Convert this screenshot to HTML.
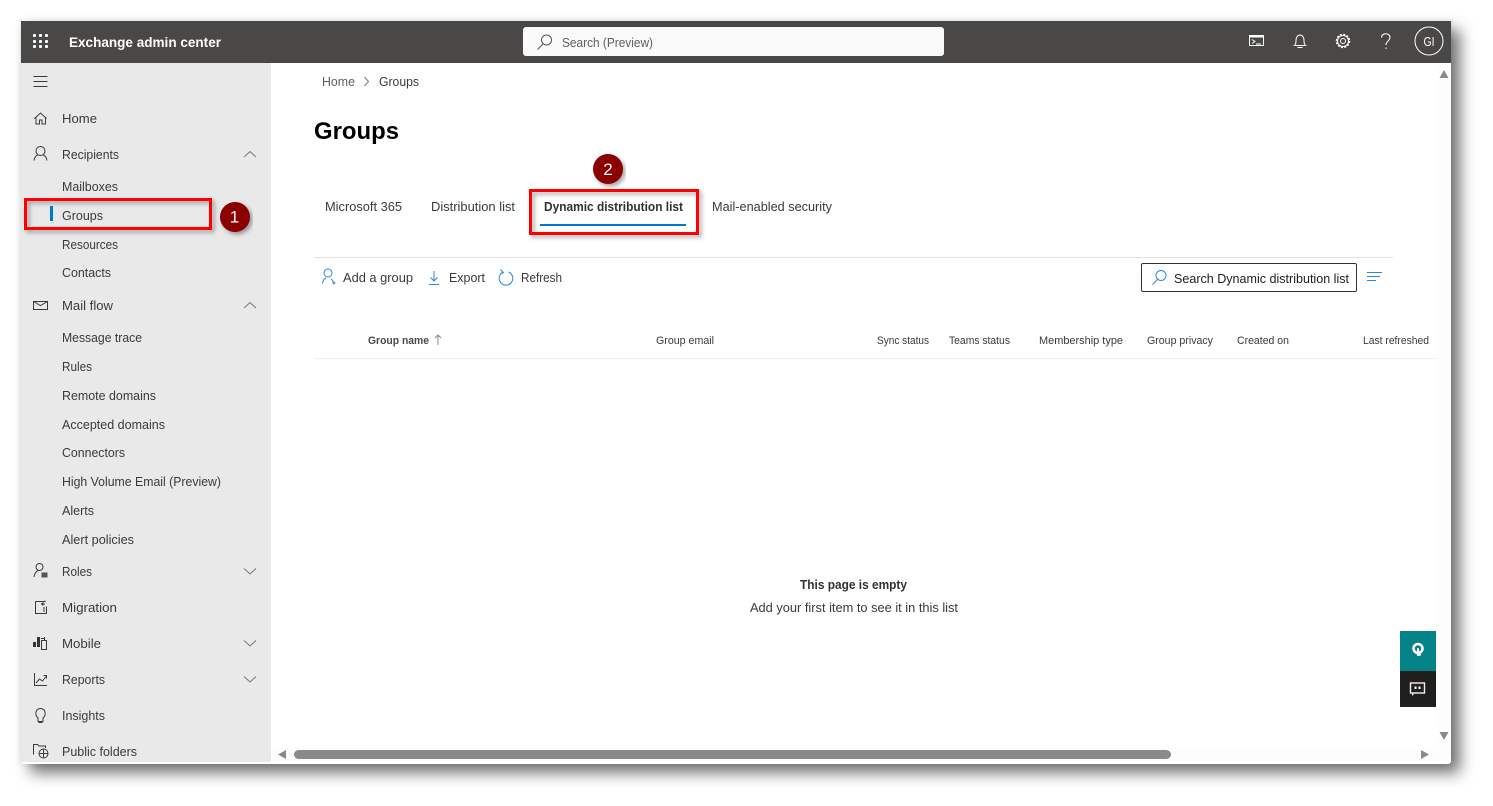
<!DOCTYPE html>
<html lang="en">
<head>
<meta charset="utf-8">
<title>Exchange admin center</title>
<style>
html,body{margin:0;padding:0;width:1493px;height:806px;overflow:hidden;background:#fff}
#win{position:absolute;left:21px;top:21px;width:1430px;height:743px;background:#fff;box-shadow:9px 9px 15px rgba(0,0,0,.55),0 0 7px rgba(0,0,0,.1);border-radius:0 0 3px 3px}
svg{position:absolute;left:0;top:0}
text{font-family:"Liberation Sans",sans-serif;font-size:13px;fill:#323130}
.n{fill:#3b3a39}
.s{font-size:11px;fill:#3b3a39}
.b{font-weight:bold}
.i{fill:none;stroke:#3b3a39;stroke-width:1}
.u{fill:none;stroke:#2b88d8;stroke-width:1}
.h{fill:none;stroke:#fff;stroke-width:1}
.c{fill:none;stroke:#777;stroke-width:1}
</style>
</head>
<body>
<div id="win"></div>
<svg width="1493" height="806" viewBox="0 0 1493 806" xmlns="http://www.w3.org/2000/svg">
<defs>
<filter id="sh" x="-10%" y="-20%" width="120%" height="150%"><feDropShadow dx="2.500" dy="2.500" stdDeviation="2" flood-color="#000" flood-opacity=".35"/></filter>
</defs>

<!-- header -->
<rect x="21" y="21" width="1430" height="42" fill="#4a4846"/>
<g fill="#fff">
<rect x="33" y="34" width="3" height="3" rx="1"/><rect x="39" y="34" width="3" height="3" rx="1"/><rect x="45" y="34" width="3" height="3" rx="1"/>
<rect x="33" y="40" width="3" height="3" rx="1"/><rect x="39" y="40" width="3" height="3" rx="1"/><rect x="45" y="40" width="3" height="3" rx="1"/>
<rect x="33" y="45" width="3" height="3" rx="1"/><rect x="39" y="45" width="3" height="3" rx="1"/><rect x="45" y="45" width="3" height="3" rx="1"/>
</g>
<text x="69" y="47" class="b" style="font-size:13.5px;fill:#fff" textLength="152" lengthAdjust="spacingAndGlyphs">Exchange admin center</text>
<rect x="523" y="27" width="421" height="29" rx="3" fill="#fafafa"/>
<circle cx="546.500" cy="40" r="5" fill="none" stroke="#555" stroke-width="1"/>
<path d="M543 44 L537.500 49.500" stroke="#555" fill="none"/>
<text x="562" y="47" style="fill:#605e5c" textLength="91" lengthAdjust="spacingAndGlyphs">Search (Preview)</text>

<rect x="1249.500" y="35.500" width="14" height="10" class="h"/>
<rect x="1249.500" y="35.500" width="14" height="2" fill="#fff"/>
<path d="M1252 39.500l3 2-3 2M1256 44h5" class="h"/>
<path d="M1294.500 45.500h11c-1.500-1-1.500-3-1.500-5 0-3-1.500-5.500-4-5.500s-4 2.500-4 5.500c0 2 0 4-1.500 5zM1297.500 47.500h5" class="h"/>
<circle cx="1343" cy="41" r="2.500" class="h"/>
<circle cx="1343" cy="41" r="5.500" class="h"/>
<circle cx="1343" cy="41" r="6.500" fill="none" stroke="#fff" stroke-width="1.500" stroke-dasharray="2 1.400"/>
<path d="M1381.500 37.500c0-5 8.500-5 8.500 0 0 3.500-4 3.500-4 7.500M1386 47.500v1.500" class="h"/>
<circle cx="1429" cy="41" r="14" fill="none" stroke="#fff" stroke-width="1"/>
<text x="1429" y="46" text-anchor="middle" style="font-size:13px;fill:#fff" textLength="11" lengthAdjust="spacingAndGlyphs">GI</text>

<!-- sidebar -->
<rect x="21" y="63" width="250" height="699" fill="#e9e9e9"/>
<path d="M33.500 76.500h14M33.500 81.500h14M33.500 86.500h14" class="i"/>

<path d="M34.500 118.500l6-5.500 6 5.500M36 117.500v6.500h3.500v-4h2.500v4h3.500v-6.500" class="i"/>
<circle cx="40.500" cy="151" r="4.500" class="i"/>
<path d="M34 160.500c.5-4 3-5.500 4-5.500M47 160.500c-.5-4-3-5.500-4-5.500" class="i"/>
<rect x="33.500" y="301.500" width="14" height="8" class="i"/>
<path d="M33.500 301.500l7 4 7-4" class="i"/>
<circle cx="39.500" cy="567" r="3.500" class="i"/>
<path d="M34 577c.5-3.500 2-5.500 4-6.500" class="i"/>
<rect x="41.500" y="572.500" width="6" height="5" fill="#555"/>
<path d="M35.500 601.500h9.500v-1M35.500 601.500v12h11v-7M45 604l-3 0M43.500 602.500l-2 1.500 2 1.500" class="i"/>
<path d="M44 607v5" stroke="#3b3a39"/>
<rect x="33" y="642" width="3" height="5" fill="#333"/>
<rect x="37" y="637" width="3" height="10" fill="#333"/>
<rect x="41.500" y="640.500" width="5" height="9" class="i"/>
<path d="M41 638.500h3M44.500 637v3" stroke="#333"/>
<path d="M34.500 673v12.500h12.500" class="i"/>
<path d="M36 683l3.500-4 3 2 4-5M43.500 675.500h3v3" class="i"/>
<path d="M38 718c-3-2.500-3.500-9 2.500-9.500 6 .5 5.500 7 2.500 9.500v3.500h-5zM38.500 722.500h4" class="i"/>
<path d="M33.500 754.500v-10h4l1.500 1.500h6.500v2" class="i"/>
<circle cx="43.500" cy="753.500" r="4.500" class="i"/>
<path d="M39 753.500h9M43.500 749v9" class="i"/>

<g transform="translate(0,1)">
<text x="62" y="122" class="n" textLength="35" lengthAdjust="spacingAndGlyphs">Home</text>
<text x="62" y="158" class="n" textLength="57" lengthAdjust="spacingAndGlyphs">Recipients</text>
<text x="62" y="190" class="n" textLength="56" lengthAdjust="spacingAndGlyphs">Mailboxes</text>
<text x="62" y="219" class="n" textLength="41" lengthAdjust="spacingAndGlyphs">Groups</text>
<text x="62" y="248" class="n" textLength="56" lengthAdjust="spacingAndGlyphs">Resources</text>
<text x="62" y="276" class="n" textLength="49" lengthAdjust="spacingAndGlyphs">Contacts</text>
<text x="62" y="309" class="n" textLength="51" lengthAdjust="spacingAndGlyphs">Mail flow</text>
<text x="62" y="341" class="n" textLength="80" lengthAdjust="spacingAndGlyphs">Message trace</text>
<text x="62" y="370" class="n" textLength="30" lengthAdjust="spacingAndGlyphs">Rules</text>
<text x="62" y="399" class="n" textLength="94" lengthAdjust="spacingAndGlyphs">Remote domains</text>
<text x="62" y="428" class="n" textLength="103" lengthAdjust="spacingAndGlyphs">Accepted domains</text>
<text x="62" y="456" class="n" textLength="63" lengthAdjust="spacingAndGlyphs">Connectors</text>
<text x="62" y="485" class="n" textLength="159" lengthAdjust="spacingAndGlyphs">High Volume Email (Preview)</text>
<text x="62" y="514" class="n" textLength="32" lengthAdjust="spacingAndGlyphs">Alerts</text>
<text x="62" y="543" class="n" textLength="72" lengthAdjust="spacingAndGlyphs">Alert policies</text>
<text x="62" y="575" class="n" textLength="30" lengthAdjust="spacingAndGlyphs">Roles</text>
<text x="62" y="611" class="n" textLength="55" lengthAdjust="spacingAndGlyphs">Migration</text>
<text x="62" y="647" class="n" textLength="39" lengthAdjust="spacingAndGlyphs">Mobile</text>
<text x="62" y="683" class="n" textLength="43" lengthAdjust="spacingAndGlyphs">Reports</text>
<text x="62" y="719" class="n" textLength="43" lengthAdjust="spacingAndGlyphs">Insights</text>
<text x="62" y="755" class="n" textLength="75" lengthAdjust="spacingAndGlyphs">Public folders</text>
</g>
<path d="M244 157l6-5.500 6 5.500M244 308l6-5.500 6 5.500" class="c"/>
<path d="M244 568.500l6 5.500 6-5.500M244 640.500l6 5.500 6-5.500M244 676.500l6 5.500 6-5.500" class="c"/>
<rect x="50" y="206" width="3" height="15" fill="#0078d4"/>

<!-- main -->
<text x="322" y="86" style="fill:#605e5c" textLength="33" lengthAdjust="spacingAndGlyphs">Home</text>
<path d="M364.500 77l4 4.500-4 4.500" class="c"/>
<text x="379" y="86" class="n" textLength="40" lengthAdjust="spacingAndGlyphs">Groups</text>
<text x="314" y="139" class="b" style="font-size:24px;fill:#000" textLength="85" lengthAdjust="spacingAndGlyphs">Groups</text>

<text x="325" y="211" class="n" textLength="77" lengthAdjust="spacingAndGlyphs">Microsoft 365</text>
<text x="431" y="211" class="n" textLength="84" lengthAdjust="spacingAndGlyphs">Distribution list</text>
<text x="544" y="211" class="b" style="fill:#323130" textLength="139" lengthAdjust="spacingAndGlyphs">Dynamic distribution list</text>
<text x="712" y="211" class="n" textLength="120" lengthAdjust="spacingAndGlyphs">Mail-enabled security</text>
<rect x="540" y="224" width="146" height="2" fill="#0078d4"/>

<rect x="314" y="257" width="1079" height="1" fill="#e1e1e1"/>

<circle cx="328" cy="273" r="4" class="u"/>
<path d="M322.500 283.500c.5-3.500 2-5 3.500-5.500M333.500 283.500c-.2-2-1-3.500-2.500-4.500M332.500 283h3M334 281.500v3" class="u"/>
<text x="343" y="282" class="n" textLength="70" lengthAdjust="spacingAndGlyphs">Add a group</text>
<path d="M434 271v10M430.500 277.500l3.500 3.500 3.500-3.500M429 284.500h10" class="u"/>
<text x="449" y="282" class="n" textLength="36" lengthAdjust="spacingAndGlyphs">Export</text>
<path d="M503 272.200a6.800 6.800 0 1 0 5.500 -.2M500.500 269.500l3 3-3.500 2" class="u"/>
<text x="521" y="282" class="n" textLength="41" lengthAdjust="spacingAndGlyphs">Refresh</text>

<rect x="1141.500" y="263.500" width="215" height="28" rx="1.500" fill="#fff" stroke="#323130"/>
<circle cx="1161" cy="275.500" r="5" class="u"/>
<path d="M1157.500 279.500l-5 5" class="u"/>
<text x="1174" y="283" style="fill:#201f1e" textLength="175" lengthAdjust="spacingAndGlyphs">Search Dynamic distribution list</text>
<path d="M1367 272.500h15M1367 276.500h13M1367 280.500h9" class="u"/>

<text x="368" y="344" class="s b" style="fill:#4a4a4a" textLength="61" lengthAdjust="spacingAndGlyphs">Group name</text>
<path d="M438 345v-10M435 338l3-3 3 3" fill="none" stroke="#8a8886"/>
<text x="656" y="344" class="s" textLength="58" lengthAdjust="spacingAndGlyphs">Group email</text>
<text x="877" y="344" class="s" textLength="52" lengthAdjust="spacingAndGlyphs">Sync status</text>
<text x="949" y="344" class="s" textLength="61" lengthAdjust="spacingAndGlyphs">Teams status</text>
<text x="1039" y="344" class="s" textLength="84" lengthAdjust="spacingAndGlyphs">Membership type</text>
<text x="1147" y="344" class="s" textLength="66" lengthAdjust="spacingAndGlyphs">Group privacy</text>
<text x="1237" y="344" class="s" textLength="52" lengthAdjust="spacingAndGlyphs">Created on</text>
<text x="1363" y="344" class="s" textLength="66" lengthAdjust="spacingAndGlyphs">Last refreshed</text>
<rect x="314" y="358" width="1122" height="1" fill="#eee"/>

<text x="800" y="589" class="b" style="fill:#323130" textLength="107" lengthAdjust="spacingAndGlyphs">This page is empty</text>
<text x="750" y="612" class="n" textLength="208" lengthAdjust="spacingAndGlyphs">Add your first item to see it in this list</text>

<!-- scrollbars -->
<rect x="1436" y="63" width="15" height="699" fill="#fdfdfd"/>
<rect x="271" y="747" width="1180" height="15" fill="#fdfdfd"/>
<path d="M1444 70l4.500 8h-9zM1444 740l4.500-8h-9zM278 754.500l8-4.500v9zM1429 754.500l-8-4.500v9z" fill="#8a8a8a"/>
<rect x="294" y="750" width="877" height="9" rx="4.500" fill="#8a8a8a"/>

<!-- floating buttons -->
<rect x="1400" y="631" width="36" height="40" fill="#038387"/>
<rect x="1400" y="671" width="36" height="36" fill="#201f1e"/>
<circle cx="1418" cy="648.500" r="4.500" fill="none" stroke="#fff" stroke-width="2.500"/>
<path d="M1418 648v7c1 0 2 0 2.500-1" fill="none" stroke="#fff" stroke-width="2"/>
<rect x="1410.500" y="683" width="14" height="10" fill="none" stroke="#f2f2f2" stroke-width="1.400"/>
<path d="M1412 693v3l3-3z" fill="#cfe6ff"/>
<rect x="1414.500" y="686.500" width="2" height="2.500" fill="#fff"/>
<rect x="1418.500" y="686.500" width="2" height="2.500" fill="#fff"/>

<!-- annotations -->
<rect x="25.500" y="199.500" width="185" height="29" fill="none" stroke="#f00" stroke-width="3" filter="url(#sh)"/>
<rect x="530.500" y="190.500" width="167" height="43" fill="none" stroke="#f00" stroke-width="3" filter="url(#sh)"/>
<circle cx="235" cy="217" r="15" fill="#8b0000" filter="url(#sh)"/>
<circle cx="608" cy="169" r="15" fill="#8b0000" filter="url(#sh)"/>
<text x="234.500" y="222.500" text-anchor="middle" style="font-size:17px;fill:#fff">1</text>
<text x="608" y="175" text-anchor="middle" style="font-size:17px;fill:#fff">2</text>
</svg>
</body>
</html>
